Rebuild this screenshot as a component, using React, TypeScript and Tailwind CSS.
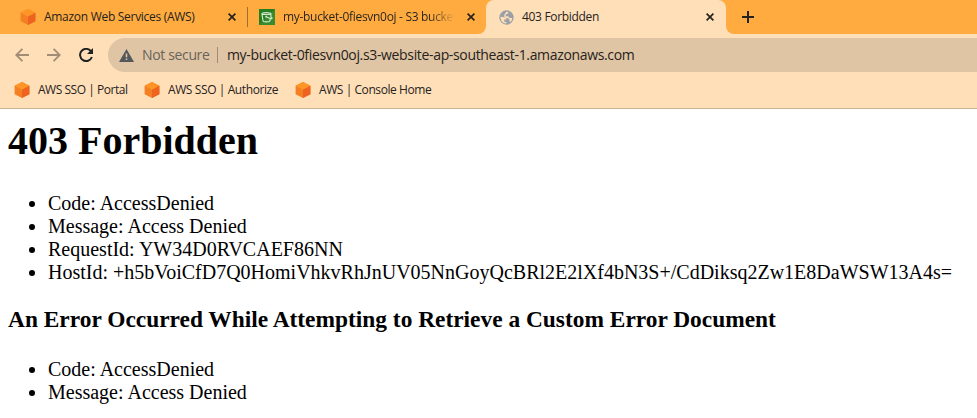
import type { ReactNode } from "react";

function AwsCube() {
  return (
    <svg className="h-4 w-4 shrink-0" viewBox="0 0 16 16">
      <path d="M8 0 15.4 3.7v8.6L8 16 .6 12.3V3.7Z" fill="#f58023" />
      <path d="M8 0 15.4 3.7 8 7.8.6 3.7Z" fill="#fd9527" />
      <path d="M15.4 3.7 8 7.8V16l7.4-3.7Z" fill="#ee6320" />
    </svg>
  );
}

function S3Icon() {
  return (
    <svg className="h-4 w-4 shrink-0" viewBox="0 0 16 16">
      <rect width="16" height="16" fill="#287d20" />
      <path d="M0 16 16 0v16Z" fill="#4a9c3b" opacity=".5" />
      <g fill="none" stroke="#d3ead0" strokeWidth="1.2">
        <path d="M3 4.6c0-1.3 8.9-1.3 8.9 0S3 5.9 3 4.6ZM3 5l1 7c.2 1.2 6.7 1.2 6.9 0l.3-2.2M7 7.8l4.4 1.7c2 .5 2.2-.6.6-1.6l-.2-3" />
      </g>
      <path d="M6.3 7h1.6v1.6H6.3z" fill="#d3ead0" />
    </svg>
  );
}

function Globe() {
  return (
    <svg className="h-[15px] w-[15px] shrink-0" viewBox="0 0 15 15">
      <circle cx="7.5" cy="7.5" r="7.2" fill="#9aa0a6" />
      <path
        d="M1.7 6.8 5.2 7.2c1.5.2 2.2 1 2.2 2.3H5.2v2.2l2.2.4v1.3C4 13.6 1.2 10.7 1.7 6.8ZM9.4 2c0 1.4-.5 1.9-1.7 2L6.6 5v1.2H9l1.6 1.7h2.6c0 1.6-.7 3.1-1.9 4.1l-.9-.9V9L9 8.2H7.4L5 6.3l.6-2 1.9-2.5Z"
        fill="#ffdfb8"
      />
    </svg>
  );
}

function Close() {
  return (
    <svg className="h-2 w-2 shrink-0" viewBox="0 0 8 8" fill="none" stroke="#26221d" strokeWidth="1.7">
      <path d="M.6.6 7.4 7.4M7.4.6.6 7.4" />
    </svg>
  );
}

function Bookmark({ children, className }: { children: ReactNode; className: string }) {
  return (
    <div className="flex shrink-0 items-center gap-2">
      <AwsCube />
      <span className={`whitespace-nowrap ${className}`}>{children}</span>
    </div>
  );
}

export default function App() {
  return (
    <div className="h-[418px] w-[977px] overflow-hidden bg-white font-['Open_Sans','Noto_Sans',sans-serif] text-xs text-[#26221d]">
      <header className="h-[109px] border-b border-[#ccb293] bg-[#ffdfb8]">
        <div className="flex h-[34px] bg-[#ffdfb8]">
          <div className="flex w-[486px] shrink-0 items-center rounded-br-lg bg-[#ffab40]">
            <div className="flex w-[247px] shrink-0 items-center pl-5">
              <AwsCube />
              <span className="ml-2 w-[184px] whitespace-nowrap text-[12px] tracking-[-0.29px]">Amazon Web Services (AWS)</span>
              <Close />
            </div>
            <div className="h-5 w-px shrink-0 bg-[#9b6e35]" />
            <div className="flex items-center pl-[11px]">
              <S3Icon />
              <span className="ml-2 w-[172px] overflow-hidden whitespace-nowrap bg-linear-to-r from-[#26221d] from-85% to-transparent bg-clip-text text-[12px] tracking-[-0.31px] text-transparent">
                my-bucket-0fiesvn0oj - S3 bucket
              </span>
              <span className="ml-3 flex"><Close /></span>
            </div>
          </div>
          <div className="w-60 shrink-0 bg-[#ffab40]">
            <div className="flex h-full items-center rounded-t-lg bg-[#ffdfb8] pl-[13px]">
              <Globe />
              <span className="ml-2 w-[184px] whitespace-nowrap text-[12px] tracking-[-0.32px]">403 Forbidden</span>
              <Close />
            </div>
          </div>
          <div className="flex flex-1 items-center rounded-bl-lg bg-[#ffab40] pl-4">
            <svg className="h-3 w-3" viewBox="0 0 12 12" stroke="#26221d" strokeWidth="2">
              <path d="M6 0v12M0 6h12" />
            </svg>
          </div>
        </div>
        <div className="flex h-[38px] items-end">
          <div className="flex h-[34px] w-[108px] shrink-0 items-center pl-[15px]">
            <svg className="h-[14px] w-[14px]" viewBox="0 0 14 14" fill="none" stroke="#a18d75" strokeWidth="1.8">
              <path d="M14 7H1.5M7.4.8 1.2 7l6.2 6.2" />
            </svg>
            <svg className="ml-[18px] h-[14px] w-[14px]" viewBox="0 0 14 14" fill="none" stroke="#a18d75" strokeWidth="1.8">
              <path d="M0 7h12.5M6.6.8 12.8 7l-6.2 6.2" />
            </svg>
            <svg className="ml-[18px] h-[14px] w-[14px]" viewBox="0 0 14 14">
              <path d="M12.2 3.5A6.1 6.1 0 1 0 12.9 9" fill="none" stroke="#202124" strokeWidth="2" />
              <path d="M14 0v6H8Z" fill="#202124" />
            </svg>
          </div>
          <div className="flex h-[34px] flex-1 items-center rounded-l-full bg-[#dfc5a3] pl-[11px]">
            <svg className="h-[13px] w-[15px] shrink-0" viewBox="0 0 15 13">
              <path d="M7.5 0 15 13H0Z" fill="#54575b" />
              <path d="M6.7 4.5h1.6v3.8H6.7zM6.7 9.4h1.6V11H6.7z" fill="#dfc5a3" />
            </svg>
            <span className="ml-2 w-[75px] whitespace-nowrap text-[14px] tracking-[-0.35px] text-[#68635c]">Not secure</span>
            <span className="h-4 w-px bg-[#a18d75]" />
            <span className="ml-[9px] whitespace-nowrap text-[14px] tracking-[-0.34px]">my-bucket-0fiesvn0oj.s3-website-ap-southeast-1.amazonaws.com</span>
          </div>
        </div>
        <div className="flex h-9 items-center gap-[15px] pl-[14px]">
          <Bookmark className="w-[91px] tracking-[-0.47px]">AWS SSO | Portal</Bookmark>
          <Bookmark className="w-[112px] tracking-[-0.4px]">AWS SSO | Authorize</Bookmark>
          <Bookmark className="tracking-[-0.43px]">AWS | Console Home</Bookmark>
        </div>
      </header>
      <main className="px-2 pt-[9px] font-['Liberation_Serif',serif] text-[20px] leading-[23px] text-black">
        <h1 className="text-[40px] leading-[45px] font-bold">403 Forbidden</h1>
        <ul className="mt-[29px] list-disc pl-10">
          <li>Code: AccessDenied</li>
          <li>Message: Access Denied</li>
          <li>RequestId: YW34D0RVCAEF86NN</li>
          <li className="whitespace-nowrap">HostId: +h5bVoiCfD7Q0HomiVhkvRhJnUV05NnGoyQcBRl2E2lXf4bN3S+/CdDiksq2Zw1E8DaWSW13A4s=</li>
        </ul>
        <h3 className="mt-[22px] text-[23.4px] leading-[27px] font-bold">An Error Occurred While Attempting to Retrieve a Custom Error Document</h3>
        <ul className="mt-[25px] list-disc pl-10">
          <li>Code: AccessDenied</li>
          <li>Message: Access Denied</li>
        </ul>
      </main>
    </div>
  );
}
